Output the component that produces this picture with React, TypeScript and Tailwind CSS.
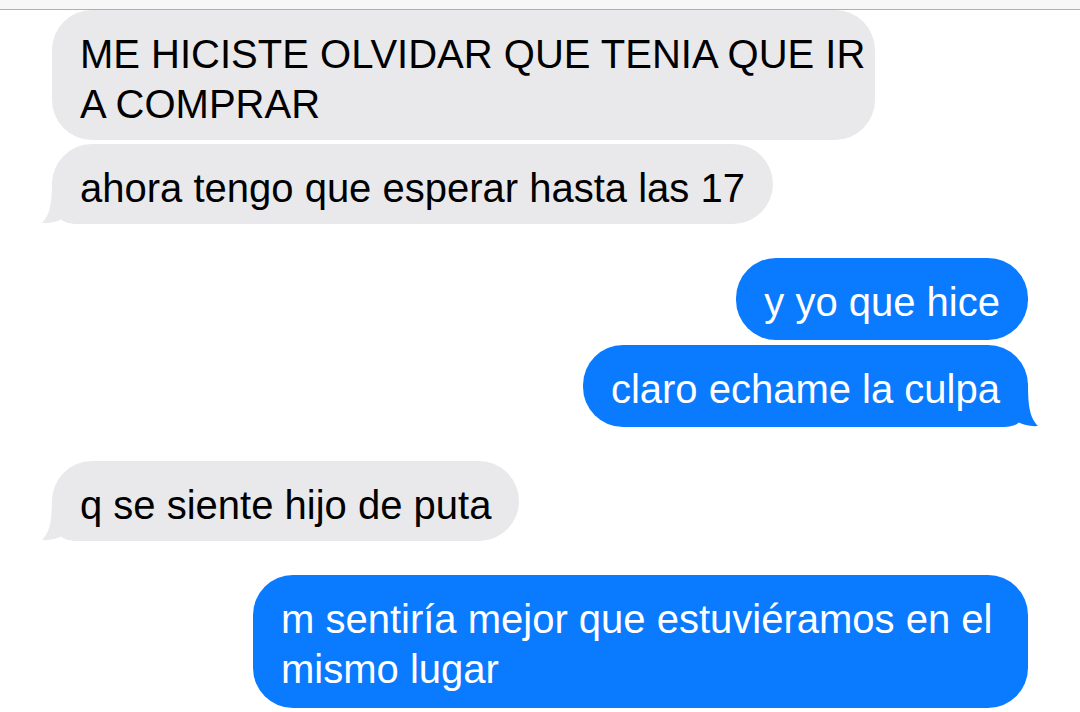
import React from "react";

const GRAY = "#e9e9eb";
const BLUE = "#0a7aff";

// iMessage style tail, drawn for the left side and mirrored for the right
function Tail({ side, color }: { side: "left" | "right"; color: string }) {
  const pos = side === "left" ? "left-[-10px]" : "right-[-10px] -scale-x-100";
  return (
    <svg
      className={`absolute bottom-0 ${pos}`}
      width="52"
      height="44"
      viewBox="0 0 52 44"
      fill={color}
    >
      <path d="M10,0 C10,24 8,35 0,43 C8,43.6 14,42 19,39.5 C23,42.5 28,44 36,44 L52,44 L52,0 Z" />
    </svg>
  );
}

function Received({
  children,
  tail,
  className = "",
}: {
  children: React.ReactNode;
  tail?: boolean;
  className?: string;
}) {
  return (
    <div
      className={`relative self-start rounded-[40px] bg-[#e9e9eb] px-[28px] pt-[19px] pb-[11px] text-black whitespace-nowrap ${className}`}
    >
      {tail && <Tail side="left" color={GRAY} />}
      <span className="relative">{children}</span>
    </div>
  );
}

function Sent({
  children,
  tail,
  className = "",
}: {
  children: React.ReactNode;
  tail?: boolean;
  className?: string;
}) {
  return (
    <div
      className={`relative self-end rounded-[40px] bg-[#0a7aff] px-[28px] pt-[19px] pb-[13px] text-white whitespace-nowrap ${className}`}
    >
      {tail && <Tail side="right" color={BLUE} />}
      <span className="relative">{children}</span>
    </div>
  );
}

export default function App() {
  return (
    <div className="h-[712px] w-[1080px] overflow-hidden bg-white font-['Liberation_Sans',Arial,sans-serif] text-[40px] leading-[50px]">
      <div className="h-[10px] border-b border-[#b0b0b0] bg-[#f7f7f7]" />
      <div className="flex flex-col px-[52px]">
        <Received className="w-[823px] pb-[10px]">
          ME HICISTE OLVIDAR QUE TENIA QUE IR
          <br />A COMPRAR
        </Received>
        <Received tail className="mt-[4px]">
          ahora tengo que esperar hasta las 17
        </Received>

        <Sent className="mt-[34px]">y yo que hice</Sent>
        <Sent tail className="mt-[5px]">
          claro echame la culpa
        </Sent>

        <Received tail className="mt-[34px] pb-[10px]">
          q se siente hijo de puta
        </Received>

        <Sent className="mt-[34px] w-[775px] pb-[14px]">
          m sentiría mejor que estuviéramos en el
          <br />
          mismo lugar
        </Sent>
        <Sent className="mt-[4px] mr-[30px] h-[80px] w-[240px]">{""}</Sent>
      </div>
    </div>
  );
}
